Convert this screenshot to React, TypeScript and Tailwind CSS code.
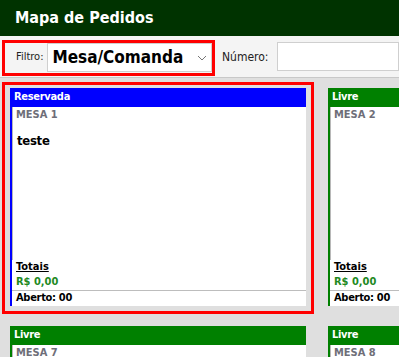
import React from "react";

// --- Mesa card ---

interface MesaCardProps {
  status: string;
  mesa: string;
  cliente?: string;
  color: "blue" | "green";
  highlight?: boolean;
}

function MesaCard({ status, mesa, cliente, color, highlight }: MesaCardProps) {
  const head = color === "blue" ? "bg-[#0000ff]" : "bg-[#008000]";
  const side = color === "blue" ? "border-[#0000ff]" : "border-[#008000]";

  return (
    <div className="relative">
      {highlight && (
        <div className="pointer-events-none absolute -left-[8px] -top-[6px] -right-[8px] -bottom-[8px] border-[3px] border-[#ff0000]" />
      )}
      <div className={`flex h-[218px] flex-col border-l-[2px] bg-white ${side}`}>
        <div className={`flex h-[19px] items-center pl-[2px] text-[11px] font-bold tracking-[-0.3px] text-white ${head}`}>
          {status}
        </div>
        <div className="flex flex-1 flex-col border-l border-[#b8b8b8] pl-[3px]">
          <div className="pt-[1px] text-[11px] font-bold leading-[14px] text-[#6e6e78]">{mesa}</div>
          {cliente && (
            <div className="mt-[11px] pl-[1px] text-[13px] font-bold leading-[16px] tracking-[-0.3px] text-black">
              {cliente}
            </div>
          )}
        </div>
        <div className="px-[4px] pb-[1px]">
          <div className="text-[11px] font-bold leading-[14px] text-black underline">Totais</div>
          <div className="mt-[1px] text-[11px] font-bold leading-[14px] text-[#1f8a1f]">R$ 0,00</div>
        </div>
        <div className="flex h-[16px] items-center border-t border-[#bdbdbd] px-[4px] text-[11px] font-bold tracking-[-0.3px] text-black">
          Aberto: 00
        </div>
      </div>
    </div>
  );
}

// --- Page ---

export default function App() {
  return (
    <div
      className="h-[357px] w-[399px] overflow-hidden bg-[#dfdfdf]"
      style={{ fontFamily: '"DejaVu Sans Condensed", "DejaVu Sans", Tahoma, sans-serif' }}
    >
      <div className="flex h-[36px] items-center bg-[#003300] pb-[1px] pl-[15px] text-[16px] font-bold text-white">
        Mapa de Pedidos
      </div>

      <div className="flex h-[42px] items-center border-b border-[#c8c8c8] bg-[#f4f4f4]">
        <div className="ml-[2px] mt-[2px] flex h-[36px] w-[213px] shrink-0 items-center border-[3px] border-[#ff0000] pl-[11px]">
          <span className="text-[11px] text-[#222]">Filtro:</span>
          <div className="ml-[4px] flex h-[29px] flex-1 items-center justify-between border border-[#cfcfcf] bg-white pl-[4px] pr-[4px]">
            <span className="text-[17px] font-bold text-black">Mesa/Comanda</span>
            <svg width="10" height="6" viewBox="0 0 10 6" fill="none">
              <path d="M1 1l4 4 4-4" stroke="#777" strokeWidth="1" />
            </svg>
          </div>
        </div>
        <span className="ml-[7px] text-[12px] text-[#222]">Número:</span>
        <div className="ml-[8px] h-[29px] flex-1 border border-[#cfcfcf] bg-white" />
      </div>

      <div className="grid grid-cols-[296px_296px] gap-x-[22px] gap-y-[20px] pl-[10px] pt-[10px]">
        <MesaCard status="Reservada" mesa="MESA 1" cliente="teste" color="blue" highlight />
        <MesaCard status="Livre" mesa="MESA 2" color="green" />
        <MesaCard status="Livre" mesa="MESA 7" color="green" />
        <MesaCard status="Livre" mesa="MESA 8" color="green" />
      </div>
    </div>
  );
}
